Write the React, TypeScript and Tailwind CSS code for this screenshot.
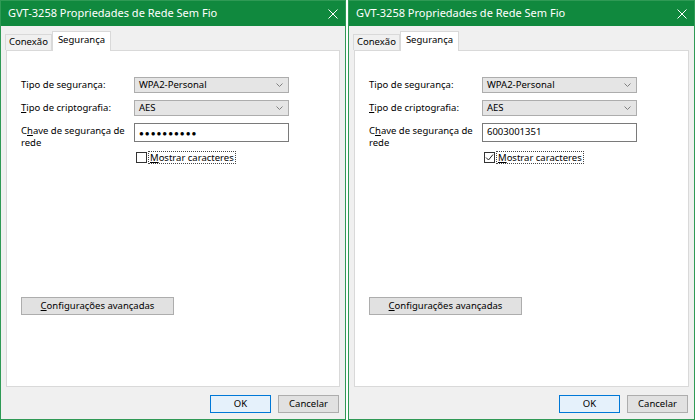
import React from "react";

const font = { fontFamily: '"Noto Sans", "Open Sans", sans-serif' };

function Chevron() {
  return (
    <svg width="7" height="4" viewBox="0 0 7 4" className="shrink-0">
      <path d="M0.5 0.5 L3.5 3.5 L6.5 0.5" fill="none" stroke="#808080" strokeWidth="1" />
    </svg>
  );
}

function Select({ value }: { value: string }) {
  return (
    <div className="flex h-[16px] w-[155px] items-center justify-between border border-[#adadad] bg-[#e5e5e5] pl-[4px] pr-[5px] text-[9.5px] text-black">
      <span>{value}</span>
      <Chevron />
    </div>
  );
}

function Btn({ label, def, u, className }: { label: string; def?: boolean; u?: boolean; className?: string }) {
  return (
    <div
      className={
        "flex h-[18px] items-center justify-center text-[9.5px] text-black " +
        (def ? "border border-[#0078d7] bg-[#e5f1fb] " : "border border-[#adadad] bg-[#e1e1e1] ") +
        (className ?? "")
      }
    >
      {u ? (
        <span>
          <span className="underline underline-offset-1">{label[0]}</span>
          {label.slice(1)}
        </span>
      ) : (
        label
      )}
    </div>
  );
}

function Dialog({ show, className }: { show: boolean; className?: string }) {
  return (
    <div className={"flex h-[420px] flex-col border border-[#2f9a55] bg-[#f0f0f0] " + (className ?? "")}>
      {/* title bar */}
      <div className="flex h-[25px] shrink-0 items-center justify-between bg-[#10893e] pl-[7px] pr-[7px] text-white">
        <span className="text-[11px]">GVT-3258 Propriedades de Rede Sem Fio</span>
        <svg width="10" height="10" viewBox="0 0 10 10">
          <path d="M0.5 0.5 L9.5 9.5 M9.5 0.5 L0.5 9.5" stroke="white" strokeWidth="1" />
        </svg>
      </div>

      {/* tabs */}
      <div className="flex items-end pl-[4px] pt-[5px] text-[9.5px] text-black">
        <div className="flex h-[16px] items-center border border-b-0 border-[#d9d9d9] bg-[#f0f0f0] px-[3px]">Conexão</div>
        <div className="relative -mb-px flex h-[20px] items-center border border-b-0 border-[#d9d9d9] bg-white px-[5px] pb-[3px]">
          Segurança
        </div>
      </div>

      <div className="mx-[5px] flex h-[337px] flex-col border border-[#d9d9d9] bg-white pl-[14px] pt-[26px] text-[9.5px] text-black">
        <div className="flex items-center">
          <span className="w-[113px]">Tipo de segurança:</span>
          <Select value="WPA2-Personal" />
        </div>
        <div className="mt-[7px] flex items-center">
          <span className="w-[113px]">
            <span className="underline underline-offset-1">T</span>ipo de criptografia:
          </span>
          <Select value="AES" />
        </div>
        <div className="mt-[7px] flex h-[19px] items-start">
          <div className="w-[113px] pt-[2px] leading-[12px]">
            <div>
              C<span className="underline underline-offset-1">h</span>ave de segurança de
            </div>
            <div>rede</div>
          </div>
          <div className="flex h-[19px] w-[155px] items-center border border-[#7a7a7a] bg-white pl-[4px]">
            {show ? (
              <span>6003001351</span>
            ) : (
              <span className="text-[8px] tracking-[1px]">●●●●●●●●●●</span>
            )}
          </div>
        </div>
        <div className="mt-[9px] flex items-center pl-[115px]">
          <div className="flex h-[11px] w-[11px] items-center justify-center border border-[#333] bg-white">
            {show && (
              <svg width="9" height="9" viewBox="0 0 9 9">
                <path d="M1 4.5 L3.5 7 L8 1.5" fill="none" stroke="#222" strokeWidth="1" />
              </svg>
            )}
          </div>
          <span className="ml-px border border-dotted border-[#444] px-px leading-[11px]">
            <span className="underline underline-offset-1">M</span>ostrar caracteres
          </span>
        </div>

        <Btn label="Configurações avançadas" u className="mt-[133px] w-[153px]" />
      </div>

      <div className="mt-[8px] flex justify-end gap-[7px] pr-[6px]">
        <Btn label="OK" def className="w-[61px]" />
        <Btn label="Cancelar" className="w-[61px]" />
      </div>
    </div>
  );
}

export default function App() {
  return (
    <div className="flex h-[420px] w-[695px] gap-[2px] overflow-hidden bg-white" style={font}>
      <Dialog show={false} className="w-[346px]" />
      <Dialog show={true} className="w-[347px]" />
    </div>
  );
}
